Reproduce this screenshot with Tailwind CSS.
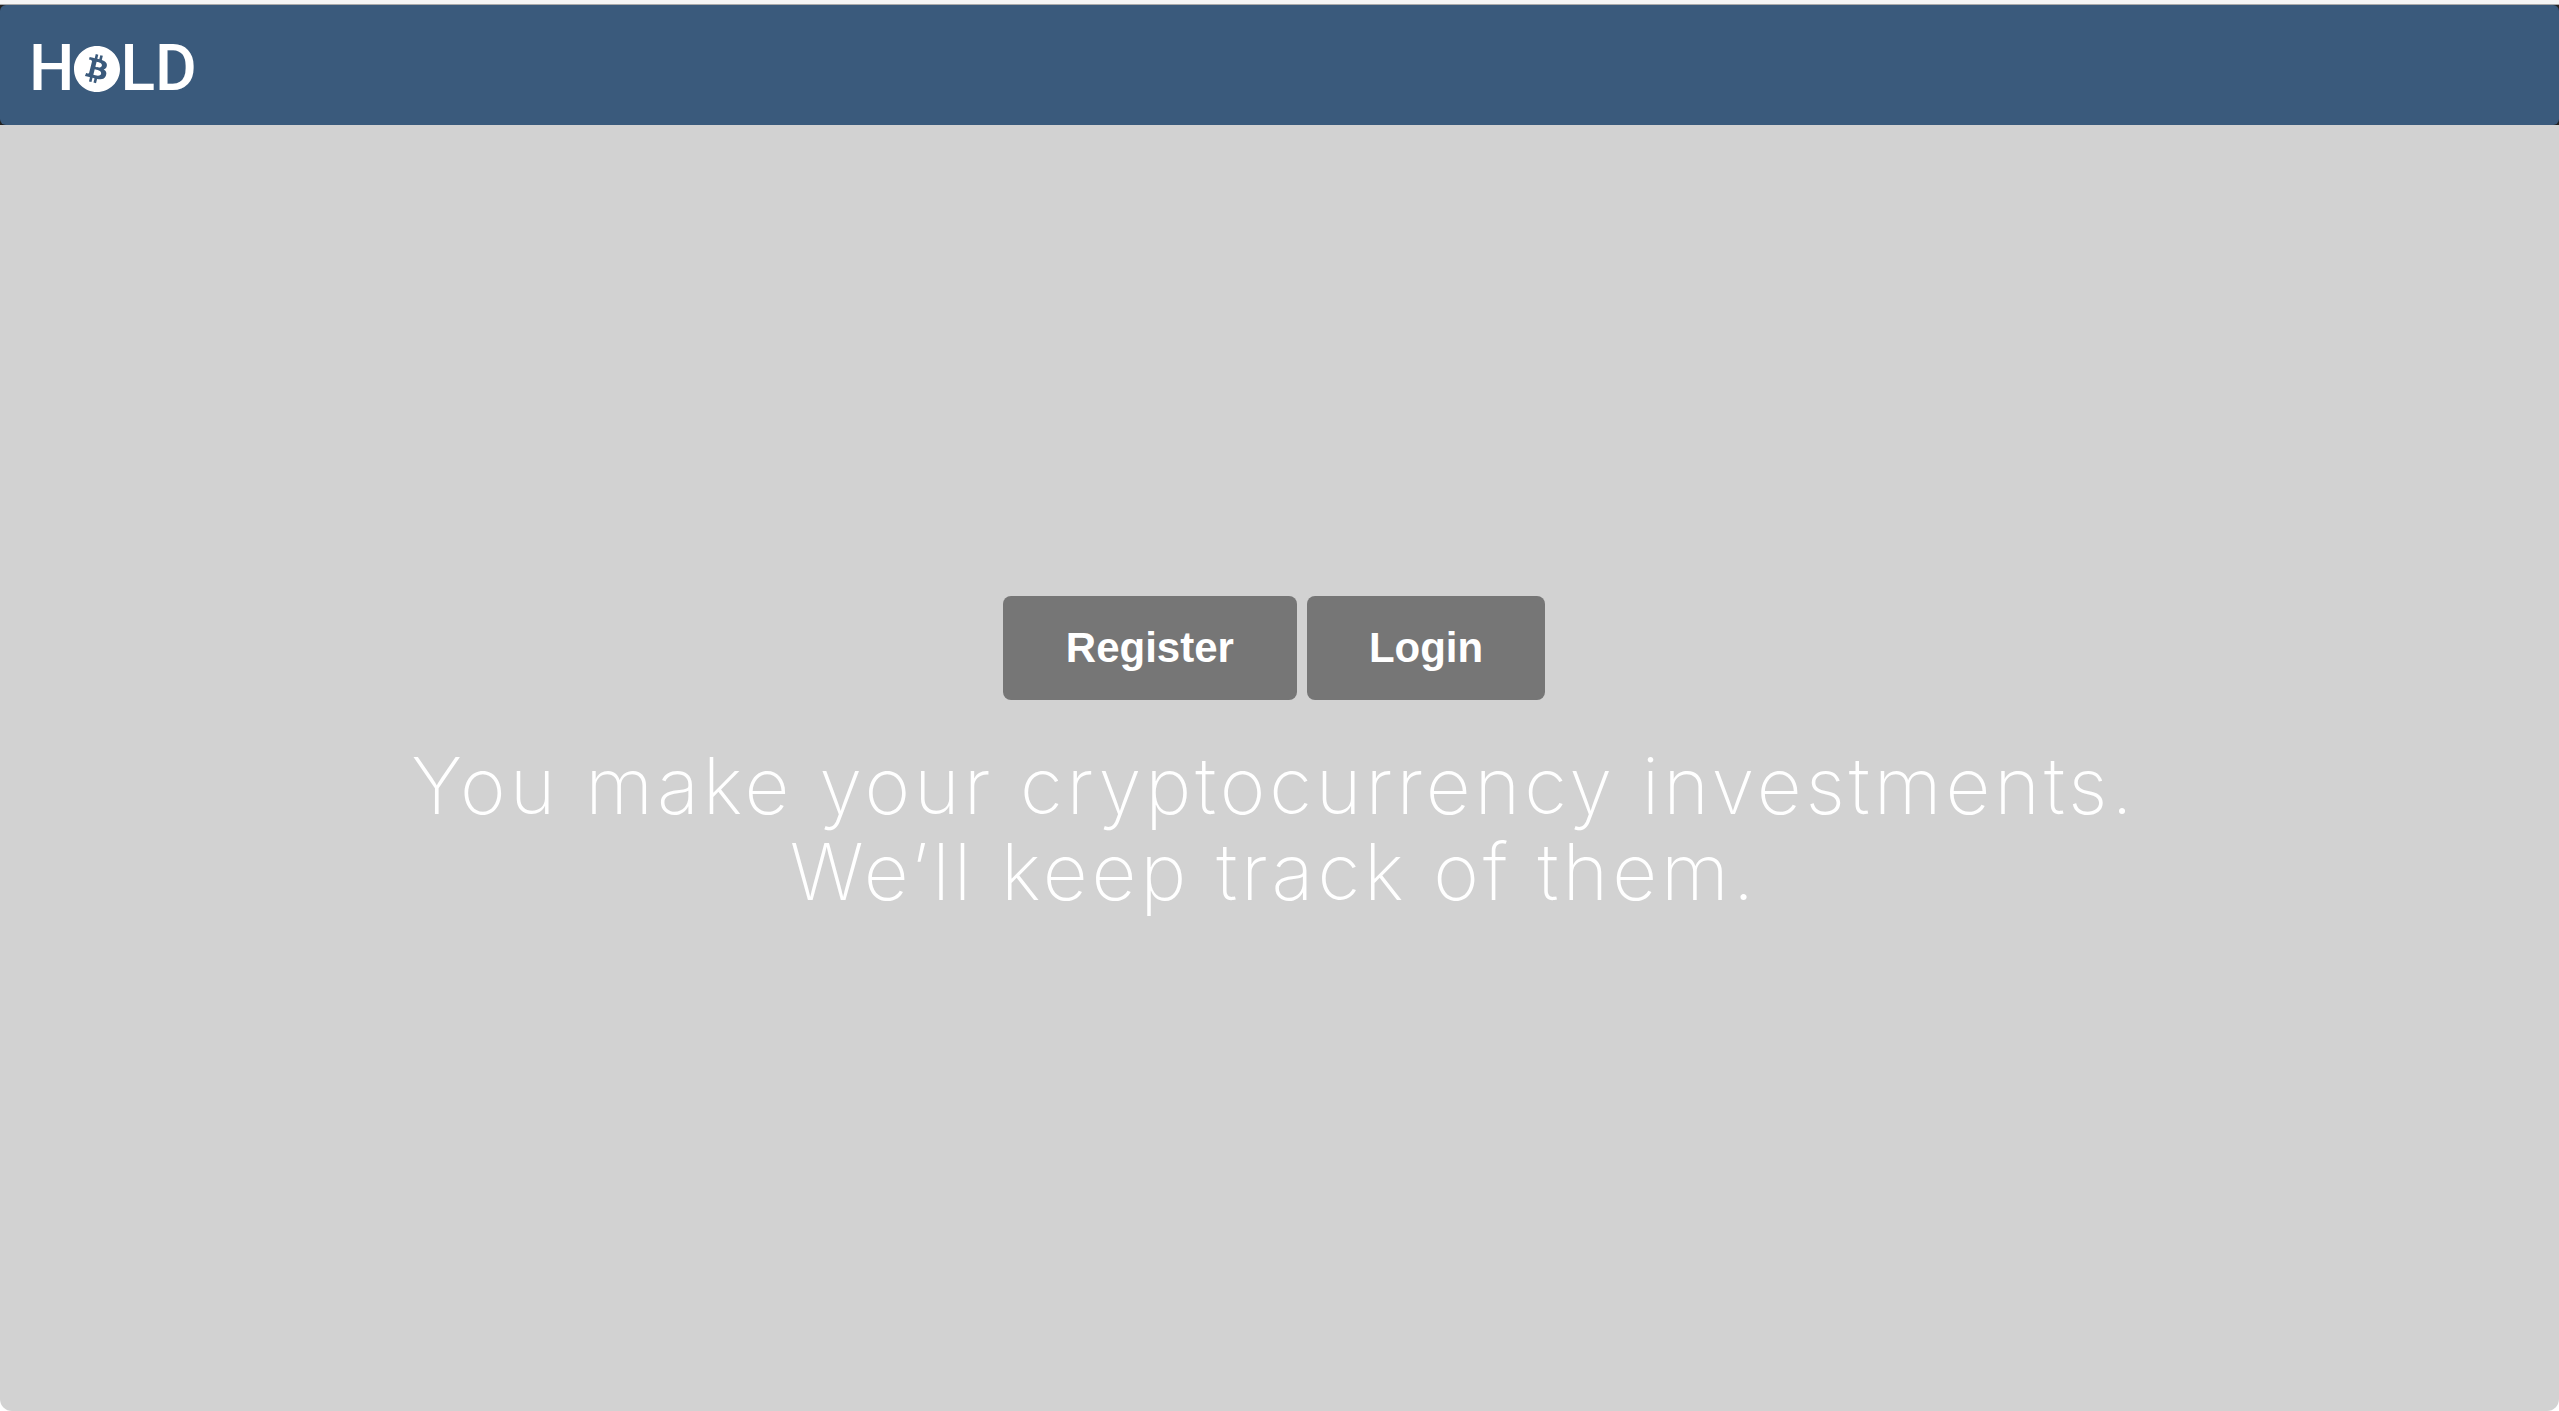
<!DOCTYPE html>
<html lang="en">
<head>
<meta charset="utf-8">
<title>HOLD</title>
<script src="https://cdn.jsdelivr.net/npm/@tailwindcss/browser@4"></script>
</head>
<body class="flex min-h-screen flex-col bg-white">
  <div class="h-[5px] border-b border-[#aaaaaa] bg-[#f5f5f5]"></div>
  <header class="bg-[#222222]">
    <nav class="flex h-[120px] items-center rounded-md bg-[#3a5a7c] px-[29px] pt-2">
      <a href="#" aria-label="HOLD" class="flex items-center font-[Roboto,sans-serif] text-[64px] leading-[64px] font-medium text-white">
        <span>H</span>
        <svg class="size-[46px]" viewBox="8 8 496 496" fill="currentColor" aria-hidden="true"><path d="M504 256c0 136.967-111.033 248-248 248S8 392.967 8 256 119.033 8 256 8s248 111.033 248 248zm-141.651-35.33c4.937-32.999-20.191-50.739-54.55-62.573l11.146-44.702-27.213-6.781-10.851 43.524c-7.154-1.783-14.502-3.464-21.803-5.13l10.929-43.81-27.198-6.781-11.153 44.686c-5.922-1.349-11.735-2.682-17.377-4.084l.031-.14-37.53-9.37-7.239 29.062s20.191 4.627 19.765 4.913c11.022 2.751 13.014 10.044 12.68 15.825l-12.696 50.925c.76.194 1.744.473 2.829.907-.907-.225-1.876-.473-2.876-.713l-17.796 71.338c-1.349 3.348-4.767 8.37-12.471 6.464.271.395-19.78-4.937-19.78-4.937l-13.51 31.147 35.414 8.827c6.588 1.651 13.045 3.379 19.4 5.006l-11.262 45.213 27.182 6.781 11.153-44.733a1038.209 1038.209 0 0 0 21.687 5.627l-11.115 44.523 27.213 6.781 11.262-45.128c46.404 8.781 81.299 5.239 95.986-36.727 11.834-33.79-.589-53.281-25.004-65.991 17.78-4.098 31.174-15.792 34.747-39.949zm-62.177 87.179c-8.41 33.79-65.308 15.523-83.755 10.943l14.944-59.899c18.446 4.603 77.6 13.717 68.811 48.956zm8.417-87.667c-7.673 30.736-55.031 15.12-70.393 11.292l13.548-54.327c15.363 3.828 64.836 10.973 56.845 43.035z"/></svg>
        <span>LD</span>
      </a>
    </nav>
  </header>
  <main class="flex grow flex-col items-center justify-center rounded-b-xl bg-[#d2d2d2] pr-[11px] pb-[26px] text-white">
    <div class="flex gap-[10px]">
      <button type="button" class="h-[104px] rounded-lg bg-[#767676] px-[63px] font-['Liberation_Sans',Arial,sans-serif] text-[42px] leading-[60px] font-bold">Register</button>
      <button type="button" class="h-[104px] rounded-lg bg-[#767676] px-[62px] font-['Liberation_Sans',Arial,sans-serif] text-[42px] leading-[60px] font-bold">Login</button>
    </div>
    <h1 class="mt-[43px] text-center font-[Inter,sans-serif] text-[78px] leading-[86px] font-extralight tracking-wider">You make your cryptocurrency investments.<br>We’ll keep track of them.</h1>
  </main>
</body>
</html>
